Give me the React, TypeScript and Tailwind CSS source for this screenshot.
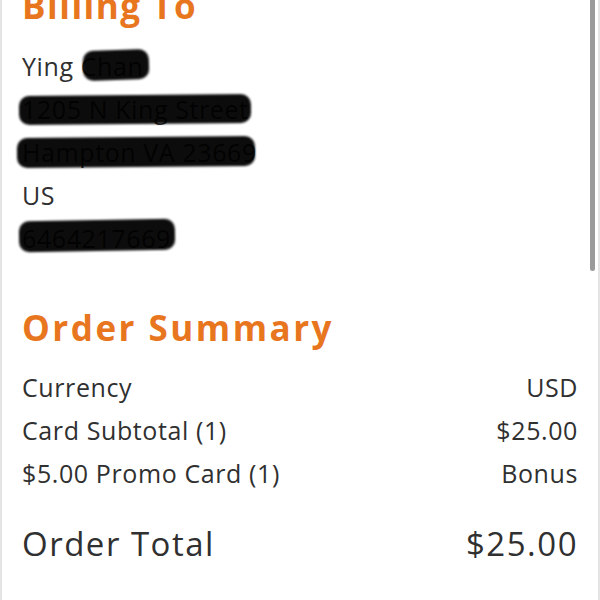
import React from "react";

const Blot = ({ className }: { className: string }) => (
  <div className={`absolute bg-black rounded-[10px] opacity-95 blur-[1px] ${className}`} />
);

const Row = ({ label, value }: { label: string; value?: string }) => (
  <div className="flex justify-between h-[43px] leading-[43px] text-[25px] tracking-[0.6px] text-[#303030]">
    <span>{label}</span>
    {value && <span>{value}</span>}
  </div>
);

export default function App() {
  return (
    <div
      className="relative w-[600px] h-[600px] overflow-hidden bg-white border-l-2 border-r-2 border-[#e4e4e4]"
      style={{ fontFamily: "'Open Sans', sans-serif" }}
    >
      <div className="flex flex-col pl-[20px] pr-[20px]">
        <h2 className="mt-[-16px] h-[43px] leading-[43px] text-[35px] font-bold tracking-[1.5px] text-[#e8761f]">Billing To</h2>
        <div className="mt-[18px] relative">
          <Row label="Ying Chan" />
          <Row label="1205 N King Street" />
          <Row label="Hampton VA 23669" />
          <Row label="US" />
          <Row label="6464217669" />
          <Blot className="left-[61px] top-[5px] w-[66px] h-[30px] rotate-[-2deg]" />
          <Blot className="left-[-3px] top-[50px] w-[232px] h-[29px] rotate-[-0.5deg]" />
          <Blot className="left-[-5px] top-[92px] w-[238px] h-[30px] rotate-[-0.5deg]" />
          <Blot className="left-[-3px] top-[175px] w-[156px] h-[31px] rotate-[-1deg]" />
        </div>
        <h2 className="mt-[46px] h-[43px] leading-[43px] text-[35px] font-bold tracking-[2.5px] text-[#e8761f]">Order Summary</h2>
        <div className="mt-[17px]">
          <Row label="Currency" value="USD" />
          <Row label="Card Subtotal (1)" value="$25.00" />
          <Row label="$5.00 Promo Card (1)" value="Bonus" />
        </div>
        <div className="mt-[27px] flex justify-between h-[43px] leading-[43px] text-[33px] tracking-[1.5px] text-[#303030]">
          <span>Order Total</span>
          <span>$25.00</span>
        </div>
      </div>
      <div className="absolute right-[3px] top-0 w-[5px] h-[271px] rounded-b-full bg-[#9a9a9a]" />
    </div>
  );
}
